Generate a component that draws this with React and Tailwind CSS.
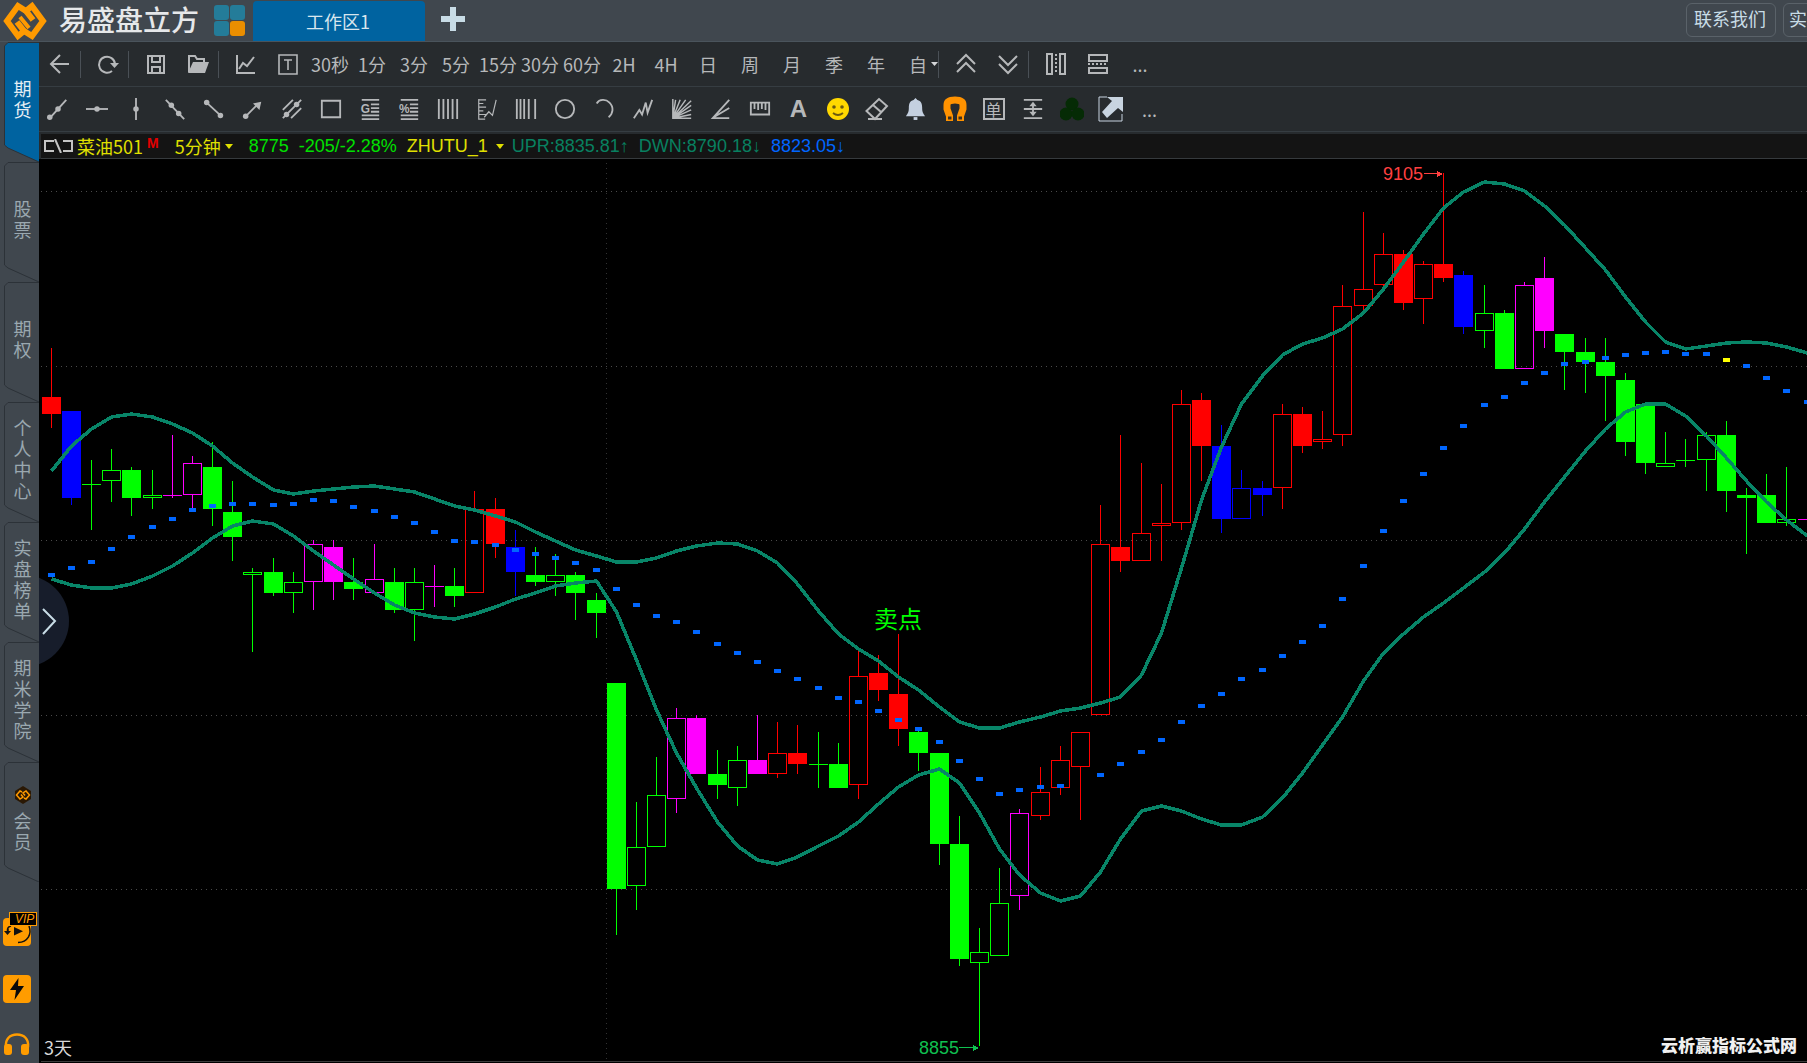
import React from 'react'

const UP = '#ff0000'
const DOWN = '#00ff00'
const BUY = '#ff00ff'
const SELL = '#0000ff'

// [color, filled, high, bodyTop, bodyBottom, low]
const CANDLES = [
    [UP, 1, 348, 397, 414, 428], [SELL, 1, 411, 411, 498, 505], [DOWN, 0, 460, 484, 485, 530],
    [DOWN, 0, 449, 470, 481, 502], [DOWN, 1, 467, 470, 498, 516], [DOWN, 0, 470, 495, 498, 509],
    [BUY, 0, 435, 495, 496, 498], [BUY, 0, 456, 463, 495, 510], [DOWN, 1, 442, 467, 509, 526],
    [DOWN, 1, 481, 512, 537, 561], [DOWN, 0, 568, 572, 575, 652], [DOWN, 1, 558, 572, 593, 596],
    [DOWN, 0, 572, 582, 593, 613], [BUY, 0, 540, 544, 582, 610], [BUY, 1, 540, 547, 582, 600],
    [DOWN, 1, 558, 582, 589, 600], [BUY, 0, 544, 579, 593, 593], [DOWN, 1, 568, 582, 610, 613],
    [DOWN, 0, 568, 582, 610, 641], [BUY, 0, 565, 586, 587, 607], [DOWN, 1, 568, 586, 596, 607],
    [UP, 0, 491, 509, 593, 593], [UP, 1, 498, 509, 544, 558], [SELL, 1, 530, 547, 572, 596],
    [DOWN, 1, 547, 575, 582, 586], [DOWN, 0, 554, 575, 582, 596], [DOWN, 1, 572, 575, 593, 620],
    [DOWN, 1, 593, 600, 613, 638], [DOWN, 1, 683, 683, 889, 935], [DOWN, 0, 802, 847, 886, 910],
    [DOWN, 0, 757, 795, 847, 847], [BUY, 0, 708, 718, 799, 813], [BUY, 1, 715, 718, 774, 774],
    [DOWN, 1, 750, 774, 785, 799], [DOWN, 0, 746, 760, 788, 806], [BUY, 1, 715, 760, 774, 774],
    [UP, 0, 722, 753, 774, 778], [UP, 1, 725, 753, 764, 774], [DOWN, 0, 732, 764, 765, 788],
    [DOWN, 1, 743, 764, 788, 788], [UP, 0, 650, 676, 785, 799], [UP, 1, 655, 673, 690, 701],
    [UP, 1, 634, 694, 729, 746], [DOWN, 1, 730, 732, 753, 771], [DOWN, 1, 753, 753, 844, 865],
    [DOWN, 1, 816, 844, 959, 966], [DOWN, 0, 928, 952, 963, 1046], [DOWN, 0, 868, 903, 956, 956],
    [BUY, 0, 809, 813, 896, 910], [UP, 0, 767, 792, 816, 820], [UP, 0, 746, 760, 788, 795],
    [UP, 0, 732, 732, 767, 820], [UP, 0, 505, 544, 715, 715], [UP, 1, 435, 547, 561, 572],
    [UP, 0, 463, 533, 561, 561], [UP, 0, 484, 523, 526, 561], [UP, 0, 390, 404, 523, 530],
    [UP, 1, 393, 400, 446, 481], [SELL, 1, 425, 446, 519, 533], [SELL, 0, 470, 488, 519, 519],
    [SELL, 1, 481, 488, 495, 516], [UP, 0, 404, 414, 488, 509], [UP, 1, 407, 414, 446, 453],
    [UP, 0, 411, 439, 442, 449], [UP, 0, 285, 306, 435, 446], [UP, 0, 212, 289, 306, 311],
    [UP, 0, 233, 254, 285, 289], [UP, 1, 250, 254, 303, 310], [UP, 0, 261, 264, 299, 324],
    [UP, 1, 173, 264, 278, 282], [SELL, 1, 271, 275, 327, 334], [DOWN, 0, 285, 313, 331, 348],
    [DOWN, 1, 310, 313, 369, 369], [BUY, 0, 282, 285, 369, 369], [BUY, 1, 257, 278, 331, 348],
    [DOWN, 1, 334, 334, 352, 390], [DOWN, 1, 338, 352, 362, 393], [DOWN, 1, 338, 362, 376, 421],
    [DOWN, 1, 373, 380, 442, 456], [DOWN, 1, 404, 404, 463, 474], [DOWN, 0, 432, 463, 467, 467],
    [DOWN, 0, 439, 460, 461, 467], [DOWN, 0, 432, 435, 460, 491], [DOWN, 1, 421, 435, 491, 512],
    [DOWN, 1, 488, 495, 498, 554], [DOWN, 1, 474, 495, 523, 523], [DOWN, 0, 467, 519, 523, 526],
    [BUY, 0, 519, 519, 520, 520],
]

const UPPER = [
    471, 446, 429, 417, 414, 417, 424, 433, 446, 463, 477, 490, 494, 491, 489, 487, 486, 489, 492, 499, 506, 510,
    516, 522, 532, 541, 550, 556, 562, 562, 558, 551, 546, 543, 544, 551, 563, 584, 611, 634, 649, 661, 677, 690,
    707, 722, 728, 728, 722, 717, 711, 708, 703, 697, 675, 633, 568, 500, 447, 404, 376, 355, 344, 338, 329, 313,
    289, 262, 234, 208, 192, 182, 184, 191, 206, 225, 248, 270, 297, 322, 342, 349, 346, 343, 342, 343, 347, 353,
]

const LOWER = [
    579, 585, 588, 588, 584, 576, 566, 553, 538, 526, 521, 524, 536, 551, 565, 579, 593, 605, 613, 617, 619, 614,
    607, 599, 593, 586, 583, 581, 612, 660, 710, 753, 788, 822, 846, 860, 864, 857, 846, 836, 822, 804, 787, 775,
    769, 783, 813, 849, 875, 893, 901, 896, 872, 839, 811, 806, 811, 819, 825, 825, 817, 798, 773, 745, 717, 681,
    653, 634, 617, 603, 588, 572, 553, 529, 502, 477, 451, 429, 412, 404, 404, 416, 436, 458, 481, 502, 520, 536,
]

const MIDDLE = [
    575, 568, 562, 549, 537, 527, 519, 510, 506, 504, 504, 505, 504, 500, 501, 507, 511, 517, 523, 532, 541, 542,
    545, 550, 554, 558, 563, 570, 589, 605, 616, 622, 632, 644, 653, 662, 671, 679, 688, 698, 702, 711, 720, 729,
    742, 761, 779, 794, 790, 787, 786, null, 775, 764, 752, 740, 722, 706, 694, 679, 670, 656, 642, 626, 599, 566,
    531, 501, 474, 448, 426, 405, 397, 383, 373, 364, 362, 358, 355, 353, 352, 354, 354, 360, 366, 378, 391, 402,
]

const GRID = [191, 366, 540, 715, 889]

const xOf = (i) => 51 + Math.floor(20.184 * i + 0.085)
const line = (ys) => ys.map((y, i) => `${xOf(i) + 0.5},${y}`).join(' ')

function Icon({ children, size = 24, width = 2, className = '' }) {
    return (
        <svg width={size} height={size} viewBox="0 0 24 24" fill="none" stroke="currentColor" strokeWidth={width} className={className}>
            {children}
        </svg>
    )
}

function Logo({ size, className = '' }) {
    return (
        <svg width={size} height={size} viewBox="0 0 44 44" fill="none" stroke="#ff9a00" strokeWidth="6" className={className}>
            <path d="M23 12 15 7 4 22l11 15 6-5-7-9" />
            <path d="M21 32 29 37 40 22 29 7l-6 5 7 9" />
            <path d="m17 18 9 11" strokeWidth="4" />
        </svg>
    )
}

const DOT = { fill: 'currentColor', stroke: 'none' }

const TOOLS = [
    ['射线', <><path d="M3 22 21 2" /><circle cx="3" cy="21" r="3" {...DOT} /><circle cx="12" cy="12" r="3" {...DOT} /></>],
    ['水平线', <><path d="M0 12h24" /><circle cx="12" cy="12" r="3" {...DOT} /></>],
    ['垂直线', <><path d="M12 0v24" /><circle cx="12" cy="12" r="3" {...DOT} /></>],
    ['直线', <><path d="M2 2l20 21" /><circle cx="8" cy="8" r="3" {...DOT} /><circle cx="16" cy="17" r="3" {...DOT} /></>],
    ['线段', <><path d="M4 5l15 14" /><circle cx="4" cy="5" r="3" {...DOT} /><circle cx="19" cy="19" r="3" {...DOT} /></>],
    ['箭头', <><path d="M4 20 17 7" /><circle cx="4" cy="20" r="3" {...DOT} /><path d="M21 4l-2 9-7-7z" {...DOT} /></>],
    ['平行线', <><path d="M2 13 13 2M2 22 22 2M11 22l11-11" /><circle cx="17" cy="7" r="3" {...DOT} /><circle cx="6" cy="18" r="3" {...DOT} /></>],
    ['矩形', <path d="M2 3h20v18H2z" />],
    ['黄金分割', <><path d="M3 2h19M13 7h9M13 11h9M13 15h9M3 19h19M3 23h19" /><text x="2" y="16" fontSize="13" fontWeight="700" fontFamily="Liberation Sans" {...DOT}>G</text></>],
    ['百分比线', <><path d="M3 2h19M13 7h9M13 11h9M13 15h9M3 19h19M3 23h19" /><text x="1" y="16" fontSize="13" fontWeight="700" fontFamily="Liberation Sans" {...DOT}>%</text></>],
    ['周期线', <path d="M2 1v22M7 1v22M12 1v22M17 1v22M22 1v22" />],
    ['波浪尺', <path d="M3 1v22h7M3 2h8M3 6h5M3 10h8M3 14h5M3 18h8M9 21l5-6 4 4 4-17" strokeWidth="1.3" />],
    ['斐波那契线', <path d="M2 1v22M6 1v22M10 1v22M15 1v22M22 1v22" />],
    ['圆', <circle cx="12" cy="12" r="10" />],
    ['圆弧', <path d="M4 6C7 1 14 1 18 5c5 5 4 12-1 16" />],
    ['折线', <path d="M2 22l6-9 3 5 4-13 2 11 5-14" />],
    ['江恩扇', <path d="M2 1v21h20M2 22 5 2M2 22 10 2M2 22 16 2M2 22 22 3M2 22l20-14M2 22l20-9M2 22l20-4" strokeWidth="1.6" />],
    ['角度线', <path d="M21 2 3 22h18M4 21l17-10" />],
    ['标尺', <path d="M2 5h20v13H2zM6 5v7M10 5v8M14 5v7M18 5v8" />],
]

const PERIODS = ['30秒', '1分', '3分', '5分', '15分', '30分', '60分', '2H', '4H', '日', '周', '月', '季', '年']

function Tool({ label, children, end = false }) {
    return (
        <button
            aria-label={label}
            className={`h-[27px] w-[42px] shrink-0 flex items-center justify-center whitespace-nowrap ${end ? 'border-r border-[#4a5056] mr-1.5' : ''}`}
        >
            {children}
        </button>
    )
}

function DrawTool({ label, children }) {
    return (
        <button aria-label={label} className="h-full w-[39px] shrink-0 flex items-center justify-center">
            {children}
        </button>
    )
}

function TopBar() {
    return (
        <header className="h-[42px] shrink-0 flex items-start overflow-hidden border-b border-[#4a545c] bg-[#40474e]">
            <Logo size={44} className="ml-[3px] -mt-px shrink-0" />
            <h1 className="ml-3 text-[28px] leading-[38px] font-medium text-[#e6e8ea] whitespace-nowrap">易盛盘立方</h1>
            <button aria-label="布局" className="ml-[15px] mt-[5px] grid grid-cols-2 gap-px shrink-0">
                <span className="w-[15px] h-[15px] rounded-[3px] bg-[#247c99]" />
                <span className="w-[15px] h-[15px] rounded-[3px] bg-[#247c99]" />
                <span className="w-[15px] h-[15px] rounded-[3px] bg-[#247c99]" />
                <span className="w-[15px] h-[15px] rounded-[3px] bg-[#ea8e00]" />
            </button>
            <button className="ml-2 mt-px h-10 w-[172px] shrink-0 rounded-t bg-[#0063a0] pr-0.5 text-lg text-[#d8e6ee]">工作区1</button>
            <button aria-label="新建工作区" className="ml-4 mt-[7px] shrink-0 text-[#c8dce6]">
                <Icon width={6}><path d="M12 0v24M0 12h24" /></Icon>
            </button>
            <div className="ml-auto mt-[3px] -mr-[66px] flex gap-[7px] shrink-0 text-lg leading-6 text-[#c8dce6]">
                <button className="h-[34px] w-[90px] rounded-md border border-[#5a6269] pb-1 pr-0.5">联系我们</button>
                <button className="h-[34px] w-[90px] rounded-md border border-[#5a6269] px-[5px] pb-1 text-left">实</button>
            </div>
        </header>
    )
}

const TABS = [['期货', true], ['股票'], ['期权'], ['个人中心'], ['实盘榜单'], ['期米学院'], ['会员']]

function Sidebar() {
    return (
        <nav className="w-[39px] shrink-0 flex flex-col bg-[#40474e]">
            {TABS.map(([name, active]) => (
                <button
                    key={name}
                    className={`relative ml-1 h-[120px] w-[35px] shrink-0 flex flex-col items-center justify-center text-lg leading-[21px] pb-1.5 pr-0.5 ${active ? 'text-[#e4eef4]' : 'text-[#9aa8b0]'}`}
                >
                    <svg viewBox="0 0 35 120" className="absolute inset-0 w-full h-full">
                        <path d="M35 .5H4L.5 4V103L4 106l31 14" fill={active ? '#0063a0' : '#40474e'} stroke="#2c3238" />
                    </svg>
                    {name === '会员' && (
                        <span className="relative mb-1.5 ml-1 flex">
                            <svg width="18" height="18" viewBox="0 0 18 18" fill="none" stroke="#ff9a00" strokeWidth="1.5">
                                <path d="M9 0l8 5v8l-8 5-8-5V5z" fill="#2a1804" stroke="none" />
                                <path d="M8 6 6 5 2.5 9 6 13l3-2-2-2.5M10 12l2 1 3.5-4L12 5 9 7l2 2.5" />
                            </svg>
                        </span>
                    )}
                    <span className="relative ml-1 w-[18px] break-all">{name}</span>
                </button>
            ))}
            <div className="mt-auto mb-2 ml-[3px] flex flex-col items-start">
                <button aria-label="VIP 回放" className="mb-7">
                    <svg width="35" height="35" viewBox="0 0 35 35" fill="none">
                        <rect y="6" width="28" height="28" rx="4" fill="#ff9c00" />
                        <path d="M11 15v8.5l9-4.25z" fill="#111" />
                        <path d="M26 14c3 8-1 16-11 16.5M5 17v4M8 14q-4 1-3.5 5" stroke="#111" strokeWidth="1.5" />
                        <path d="M1 19h7l-3.5 4z" fill="#111" />
                        <rect x="6.5" y=".5" width="27" height="13" fill="#000" stroke="#ff9c00" />
                        <text x="12" y="11" fontSize="12" fontStyle="italic" fontFamily="Liberation Sans" fill="#ff9c00">VIP</text>
                    </svg>
                </button>
                <button aria-label="闪电下单" className="mb-[30px] size-7 flex items-center justify-center rounded bg-[#ff9c00]">
                    <svg width="14" height="22" viewBox="0 0 14 22"><path d="M8.5 0 0 12h6L4.5 22 14 8H8z" fill="#0a0a0a" /></svg>
                </button>
                <button aria-label="客服">
                    <svg width="28" height="22" viewBox="0 0 28 22" fill="none">
                        <path d="M3 14C2 6 7 1.5 14 1.5S26 6 25 14" stroke="#ff9c00" strokeWidth="2.5" />
                        <rect x="1" y="11" width="8" height="11" rx="3" fill="#ff9c00" />
                        <rect x="18" y="11" width="8" height="11" rx="3" fill="#ff9c00" />
                    </svg>
                </button>
            </div>
        </nav>
    )
}

function PeriodBar() {
    return (
        <div className="h-[45px] shrink-0 flex items-center overflow-hidden border-b border-[#363d42] bg-[#272b2e] text-lg text-[#b6b8ba]">
            <Tool label="后退" end>
                <Icon><path d="M21 12H4M12 3l-9 9 9 9" /></Icon>
            </Tool>
            <Tool label="刷新" end>
                <Icon><path d="M16 19A8 8 0 1 1 19 12" /><path d="M14 11h9l-4.5 5z" {...DOT} /></Icon>
            </Tool>
            <Tool label="保存">
                <Icon><path d="M4 4h16v17H4zM8 4v6h8V4M8 21v-6h8v6" /></Icon>
            </Tool>
            <Tool label="打开" end>
                <Icon><path d="M3 20V4h6l2 3h7v3" /><path d="M2 21 7 10h16l-4 11z" {...DOT} /></Icon>
            </Tool>
            <Tool label="分时">
                <Icon><path d="M3 3v18h18M5 17l4-6 4 3 7-9" /></Icon>
            </Tool>
            <Tool label="文本">
                <Icon><path d="M3 3h18v19H3zM8 8h8M12 8v10" strokeWidth="1.6" /></Icon>
            </Tool>
            {PERIODS.map((p) => <Tool key={p} label={p}>{p}</Tool>)}
            <Tool label="自定义周期" end>
                <span className="ml-3">自</span>
                <svg width="10" height="6" viewBox="0 0 10 6" className="ml-1" fill="#d4d6d8"><path d="M0 0h10L5 6z" /></svg>
            </Tool>
            <Tool label="上移">
                <Icon><path d="M3 12l9-9 9 9M3 20l9-9 9 9" /></Icon>
            </Tool>
            <Tool label="下移" end>
                <Icon><path d="M3 4l9 9 9-9M3 12l9 9 9-9" /></Icon>
            </Tool>
            <Tool label="左右分屏">
                <Icon><path d="M3 2h5v20H3zM16 2h5v20h-5z" /><path d="M12 2v20" strokeDasharray="2 2" /></Icon>
            </Tool>
            <Tool label="上下分屏">
                <Icon><path d="M3 3h18v6H3zM3 16h18v5H3z" /><path d="M2 12h20" strokeDasharray="2 2" /></Icon>
            </Tool>
            <Tool label="更多">...</Tool>
        </div>
    )
}

function DrawBar() {
    return (
        <div className="h-[45px] shrink-0 flex items-center overflow-hidden border-b border-[#363d42] bg-[#272b2e] text-lg text-[#b6b8ba]">
            <div className="-ml-px flex h-full items-center">
                {TOOLS.map(([name, shape]) => (
                    <DrawTool key={name} label={name}><Icon size={22}>{shape}</Icon></DrawTool>
                ))}
                <DrawTool label="文字"><span className="font-['Liberation_Sans'] text-2xl font-bold">A</span></DrawTool>
                <DrawTool label="表情">
                    <svg width="22" height="22" viewBox="0 0 22 22">
                        <circle cx="11" cy="11" r="11" fill="#ffd800" />
                        <circle cx="7" cy="9" r="1.8" fill="#6b5a10" />
                        <circle cx="15" cy="9" r="1.8" fill="#6b5a10" />
                        <path d="M6 15q5 4 10 0" fill="none" stroke="#6b5a10" strokeWidth="1.8" />
                    </svg>
                </DrawTool>
                <DrawTool label="橡皮">
                    <Icon><path d="M1.5 14 14 2l8 7-12 13zM8 8l8 7M3 22h14" /></Icon>
                </DrawTool>
                <DrawTool label="预警">
                    <svg width="19" height="23" viewBox="0 0 20 24" fill="#c4d0e0">
                        <path d="M10 0l2 2c4 1 5 4 5 8 0 5 1 6 3 9H0c2-3 3-4 3-9 0-4 1-7 5-8z" />
                        <path d="M8 20h4v3H8z" />
                    </svg>
                </DrawTool>
                <DrawTool label="磁吸">
                    <svg width="24" height="26" viewBox="0 0 24 26" fill="none">
                        <path d="M6.5 25V20L4 13V9q0-5 8-5t8 5v4l-2.5 7v5" stroke="#ff9200" strokeWidth="7" />
                        <path d="M5 20.500h3.500v3H5zM15.500 20.500H19v3h-3.500z" fill="#3c3020" />
                    </svg>
                </DrawTool>
                <DrawTool label="画线下单">
                    <span className="flex h-[22px] w-[22px] items-center justify-center border-2 border-current text-base leading-none">单</span>
                </DrawTool>
                <DrawTool label="间距">
                    <Icon size={22}><path d="M2 2h20M2 12h20M2 22h20M12 6v12" /><path d="M8 9l4-5 4 5zM8 15l4 5 4-5z" {...DOT} /></Icon>
                </DrawTool>
                <DrawTool label="指标">
                    <svg width="24" height="24" viewBox="0 0 24 24" fill="#052b05">
                        <circle cx="12" cy="7" r="6.5" /><circle cx="6" cy="17" r="6.5" /><circle cx="18" cy="17" r="6.5" />
                    </svg>
                </DrawTool>
                <DrawTool label="弹出">
                    <svg width="26" height="26" viewBox="0 0 26 26" fill="none">
                        <path d="M9 1H1v24h23v-7" stroke="#c8d4e0" />
                        <path d="M9 1h16v15l-5-4-11 10-5-6L14 5z" fill="#c8d4e0" />
                    </svg>
                </DrawTool>
                <DrawTool label="更多">...</DrawTool>
            </div>
        </div>
    )
}

function Caret() {
    return <svg width="8" height="5" viewBox="0 0 8 5" fill="currentColor" className="shrink-0"><path d="M0 0h8L4 5z" /></svg>
}

function QuoteBar() {
    return (
        <div className="ml-0.5 mt-0.5 h-[25px] shrink-0 flex items-center overflow-hidden whitespace-nowrap border-b border-[#363a3d] bg-[#141414] pl-[3px] font-['Liberation_Sans','Noto_Sans_CJK_SC',sans-serif] text-lg leading-6 text-[#e0e000]">
            <svg width="29" height="14" viewBox="0 0 29 14" fill="none" stroke="#c4c4c4" strokeWidth="2" className="shrink-0">
                <path d="M10 2H1v10h9M19 2h9v10h-9M11 0l6 14" />
            </svg>
            <span className="ml-1 font-['Noto_Sans_CJK_SC']">菜油501</span>
            <b className="ml-1 mb-1.5 text-sm leading-none text-[#e00000]">M</b>
            <button className="ml-4 flex items-center gap-1"><span className="font-['Noto_Sans_CJK_SC']">5分钟</span><Caret /></button>
            <span className="ml-4 text-[#00e000]">8775</span>
            <span className="ml-2.5 text-[#00e000]">-205/-2.28%</span>
            <button className="ml-2.5 flex items-center gap-2">ZHUTU_1<Caret /></button>
            <span className="ml-2 text-[#088060]">UPR:8835.81↑</span>
            <span className="ml-2.5 text-[#088060]">DWN:8790.18↓</span>
            <span className="ml-2.5 text-[#0066ff]">8823.05↓</span>
        </div>
    )
}

function Chart() {
    return (
        <svg viewBox="39 159 1768 904" preserveAspectRatio="xMinYMin slice" className="block h-full w-full" shapeRendering="crispEdges">
            {GRID.map((y) => (
                <line key={y} x1="41" x2="1807" y1={y + 0.5} y2={y + 0.5} stroke="#4a4a4a" strokeDasharray="1 4" />
            ))}
            <line x1="606.5" x2="606.5" y1="163" y2="1060" stroke="#333333" strokeDasharray="1 4" />
            {CANDLES.map(([color, filled, high, top, bottom, low], i) => {
                const x = xOf(i)
                const flat = bottom - top <= 1
                return (
                    <g key={i} fill={color}>
                        <rect x={x} y={high} width="1" height={top - high} />
                        <rect x={x} y={bottom} width="1" height={low - bottom} />
                        {filled || flat
                            ? <rect x={x - 9} y={top} width="19" height={bottom - top} />
                            : <rect x={x - 8.5} y={top + 0.5} width="18" height={bottom - top - 1} fill="none" stroke={color} />}
                    </g>
                )
            })}
            {MIDDLE.map((y, i) => y && (
                <rect key={i} x={xOf(i) - 3} y={y - 2} width="7" height="4" fill={i === 83 ? '#ffff00' : '#0066ff'} />
            ))}
            <g fill="none" stroke="#088568" strokeWidth="3.5" strokeLinejoin="round">
                <polyline points={line(UPPER)} />
                <polyline points={line(LOWER)} />
            </g>
            <g fontFamily="Liberation Sans" fontSize="18">
                <text x="1383" y="180" fill="#ff4040">9105</text>
                <text x="919" y="1054" fill="#10c050">8855</text>
            </g>
            <path d="M1424 173.5h15" stroke="#ff4040" />
            <path d="M1437 171v6l6-3z" fill="#ff4040" />
            <path d="M959 1047.5h16" stroke="#10c050" />
            <path d="M973 1045v6l6-3z" fill="#10c050" />
            <text x="874" y="628" fill="#00ff00" fontSize="24" fontFamily="Noto Sans CJK SC">卖点</text>
            <text x="44" y="1055" fill="#d8d8d8" fontSize="18" fontFamily="Noto Sans CJK SC">3天</text>
            <line x1="41" x2="1807" y1="1061.5" y2="1061.5" stroke="#3c3c3c" />
        </svg>
    )
}

export default function App() {
    return (
        <div className="h-screen flex flex-col overflow-hidden bg-[#40474e] font-['Noto_Sans_CJK_SC',sans-serif]">
            <TopBar />
            <div className="flex-1 min-h-0 flex">
                <Sidebar />
                <main className="flex-1 min-w-0 flex flex-col bg-[#272b2e]">
                    <PeriodBar />
                    <DrawBar />
                    <QuoteBar />
                    <div className="relative flex-1 min-h-0 overflow-hidden bg-black">
                        <Chart />
                        {/* Panel toggle */}
                        <button aria-label="展开面板" className="absolute left-0 top-[416px] h-[92px] w-[30px] overflow-hidden">
                            <svg width="30" height="92" viewBox="0 0 30 92" fill="none">
                                <circle cx="-16" cy="46" r="46" fill="#171d2b" />
                                <path d="M4 34l12 12L4 59" stroke="#c8dce6" strokeWidth="2" />
                            </svg>
                        </button>
                        <p className="absolute bottom-1.5 right-2.5 text-[17px] leading-6 font-black text-[#f0f0f0]">云析赢指标公式网</p>
                    </div>
                </main>
            </div>
        </div>
    )
}
